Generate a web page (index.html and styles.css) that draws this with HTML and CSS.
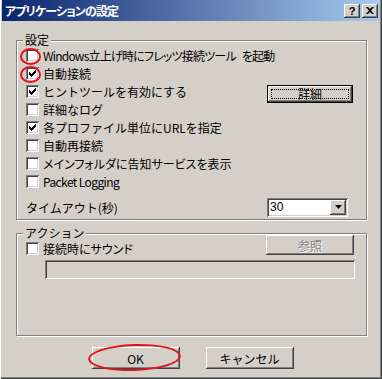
FILE: index.html
```html
<!DOCTYPE html>
<html lang="ja">
<head>
  <meta charset="utf-8" />
  <title>アプリケーションの設定</title>
  <link rel="stylesheet" href="styles.css">
</head>
<body>
  <div class="window">
    <div class="titlebar">
      <span class="title">アプリケーションの設定</span>
      <div class="title-buttons">
        <span class="tbtn tbtn-help">?</span>
        <span class="tbtn">
          <svg width="8" height="7" viewBox="0 0 8 7"><path d="M0 0h2l2 2 2-2h2L5 3.5 8 7H6L4 5 2 7H0l3-3.5z" fill="#000"/></svg>
        </span>
      </div>
    </div>

    <div class="content">
      <div class="group group-settings">
        <span class="legend">設定</span>
        <div class="row row-tight"><span class="check"></span>Windows立上げ時にフレッツ接続ツール を起動</div>
        <div class="row"><span class="check checked"></span>自動接続</div>
        <div class="row row-detail">
          <span class="row-label"><span class="check checked"></span>ヒントツールを有効にする</span>
          <span class="btn btn-focus"><span class="focus-rect">詳細</span></span>
        </div>
        <div class="row"><span class="check"></span>詳細なログ</div>
        <div class="row"><span class="check checked"></span>各プロファイル単位にURLを指定</div>
        <div class="row"><span class="check"></span>自動再接続</div>
        <div class="row row-narrow"><span class="check"></span>メインフォルダに告知サービスを表示</div>
        <div class="row row-latin"><span class="check"></span>Packet Logging</div>
        <div class="timeout">
          <span>タイムアウト(秒)</span>
          <div class="combo">
            <span class="combo-value">30</span>
            <span class="combo-drop">
              <svg width="7" height="4" viewBox="0 0 7 4"><path d="M0 0h7L3.5 4z" fill="#000"/></svg>
            </span>
          </div>
        </div>
      </div>

      <div class="group group-action">
        <span class="legend">アクション</span>
        <div class="row row-sound">
          <span class="row-label row-narrow"><span class="check"></span>接続時にサウンド</span>
          <span class="btn btn-disabled">参照</span>
        </div>
        <div class="field-disabled"></div>
      </div>

      <div class="footer">
        <span class="btn btn-dialog">OK</span>
        <span class="btn btn-dialog">キャンセル</span>
      </div>
    </div>

    <!-- red annotation marks drawn over the screenshot -->
    <span class="mark mark-check1"></span>
    <span class="mark mark-check2"></span>
    <span class="mark mark-ok"></span>
  </div>
</body>
</html>
```

FILE: styles.css
```css
*, *::before, *::after {
  box-sizing: border-box;
}

body {
  margin: 0;
  background: #d4d0c8;
  font-family: "Noto Sans CJK JP", sans-serif;
  font-size: 12px;
  color: #000;
}

.window {
  position: relative;
  width: 382px;
  height: 379px;
  padding: 0 2px;
  background: #d4d0c8;
  box-shadow: inset 1px 0 #fff, inset -1px -1px #404040, inset -2px -2px #808080;
}

.titlebar {
  display: flex;
  align-items: center;
  justify-content: space-between;
  height: 21px;
  padding: 0 2px 0 3px;
  background: linear-gradient(to right, #0a246a, #a6caf0);
}

.title {
  color: #fff;
  font-weight: 700;
  font-size: 12px;
  font-feature-settings: "palt";
  letter-spacing: -0.9px;
}

.title-buttons {
  display: flex;
  gap: 2px;
}

.tbtn {
  display: flex;
  align-items: center;
  justify-content: center;
  width: 16px;
  height: 14px;
  background: #d4d0c8;
  font-family: "Liberation Sans", sans-serif;
  font-weight: 700;
  font-size: 11px;
  box-shadow: inset -1px -1px #404040, inset 1px 1px #fff, inset -2px -2px #808080;
}

.content {
  padding: 19px 13px 0 14px;
}

.group {
  position: relative;
  border: 1px solid #808080;
  box-shadow: inset 1px 1px #fff, 1px 1px #fff;
}

.group-settings {
  height: 180px;
  padding: 5px 13px 0 8px;
}

.group-action {
  height: 103px;
  margin-top: 13px;
  padding: 5px 12px 0 8px;
}

.legend {
  position: absolute;
  top: -8px;
  left: 6px;
  padding: 0 2px;
  background: #d4d0c8;
  line-height: 14px;
}

.row {
  display: flex;
  align-items: center;
  height: 18px;
  white-space: pre;
}

.row-tight {
  font-feature-settings: "palt";
  letter-spacing: -0.8px;
  word-spacing: 4px;
}

.row-narrow {
  font-feature-settings: "palt";
}

.row-latin {
  letter-spacing: -0.6px;
}

.row-label {
  display: flex;
  align-items: center;
}

.row-detail, .row-sound {
  justify-content: space-between;
}

.check {
  position: relative;
  flex: none;
  width: 13px;
  height: 13px;
  margin: 0 4px 0 1px;
  background: #fff;
  letter-spacing: 0;
  box-shadow: inset 1px 1px #808080, inset -1px -1px #fff, inset 2px 2px #404040, inset -2px -2px #d4d0c8;
}

.check.checked::after {
  content: "";
  position: absolute;
  left: 3px;
  top: 3px;
  width: 7px;
  height: 7px;
  background: linear-gradient(#000, #000) 0 2px / 1px 3px no-repeat,
              linear-gradient(#000, #000) 1px 3px / 1px 3px no-repeat,
              linear-gradient(#000, #000) 2px 4px / 1px 3px no-repeat,
              linear-gradient(#000, #000) 3px 3px / 1px 3px no-repeat,
              linear-gradient(#000, #000) 4px 2px / 1px 3px no-repeat,
              linear-gradient(#000, #000) 5px 1px / 1px 3px no-repeat,
              linear-gradient(#000, #000) 6px 0 / 1px 3px no-repeat;
}

.btn {
  display: flex;
  align-items: center;
  justify-content: center;
  background: #d4d0c8;
  box-shadow: inset -1px -1px #404040, inset 1px 1px #fff, inset -2px -2px #808080;
}

.btn-focus {
  width: 86px;
  height: 18px;
  margin-top: 5px;
  padding: 3px;
  border: 1px solid #000;
  box-shadow: inset -1px -1px #404040, inset 1px 1px #fff, inset -2px -2px #808080;
}

.focus-rect {
  display: flex;
  align-items: center;
  justify-content: center;
  width: 100%;
  height: 100%;
  border: 1px dotted #000;
}

.timeout {
  display: flex;
  align-items: center;
  justify-content: space-between;
  height: 18px;
  margin-top: 8px;
  padding-left: 1px;
  padding-right: 5px;
}

.combo {
  display: flex;
  align-items: center;
  width: 81px;
  height: 19px;
  padding: 2px;
  background: #fff;
  box-shadow: inset 1px 1px #808080, inset -1px -1px #fff, inset 2px 2px #404040, inset -2px -2px #d4d0c8;
}

.combo-value {
  flex: 1;
  padding-left: 1px;
  font-family: "Liberation Sans", sans-serif;
}

.combo-drop {
  display: flex;
  align-items: center;
  justify-content: center;
  width: 16px;
  height: 15px;
  background: #d4d0c8;
  box-shadow: inset -1px -1px #404040, inset 1px 1px #fff, inset -2px -2px #808080;
}

.btn-disabled {
  align-self: flex-start;
  width: 88px;
  height: 20px;
  margin-top: -4px;
  color: #808080;
  text-shadow: 1px 1px #fff;
}

.field-disabled {
  width: 310px;
  height: 19px;
  margin: 3px 0 0 20px;
  background: #d4d0c8;
  box-shadow: inset 1px 1px #808080, inset -1px -1px #fff, inset 2px 2px #404040, inset -2px -2px #d4d0c8;
}

.footer {
  display: flex;
  justify-content: center;
  gap: 26px;
  margin-top: 11px;
  padding-left: 2px;
}

.btn-dialog {
  width: 88px;
  height: 22px;
}

.mark {
  position: absolute;
  border: 2px solid #dc1420;
  border-radius: 50%;
}

.mark-check1 {
  left: 20px;
  top: 48px;
  width: 21px;
  height: 17px;
}

.mark-check2 {
  left: 20px;
  top: 66px;
  width: 21px;
  height: 17px;
}

.mark-ok {
  left: 88px;
  top: 344px;
  width: 93px;
  height: 27px;
  border-width: 2.5px;
  transform: rotate(-2deg);
}
```
